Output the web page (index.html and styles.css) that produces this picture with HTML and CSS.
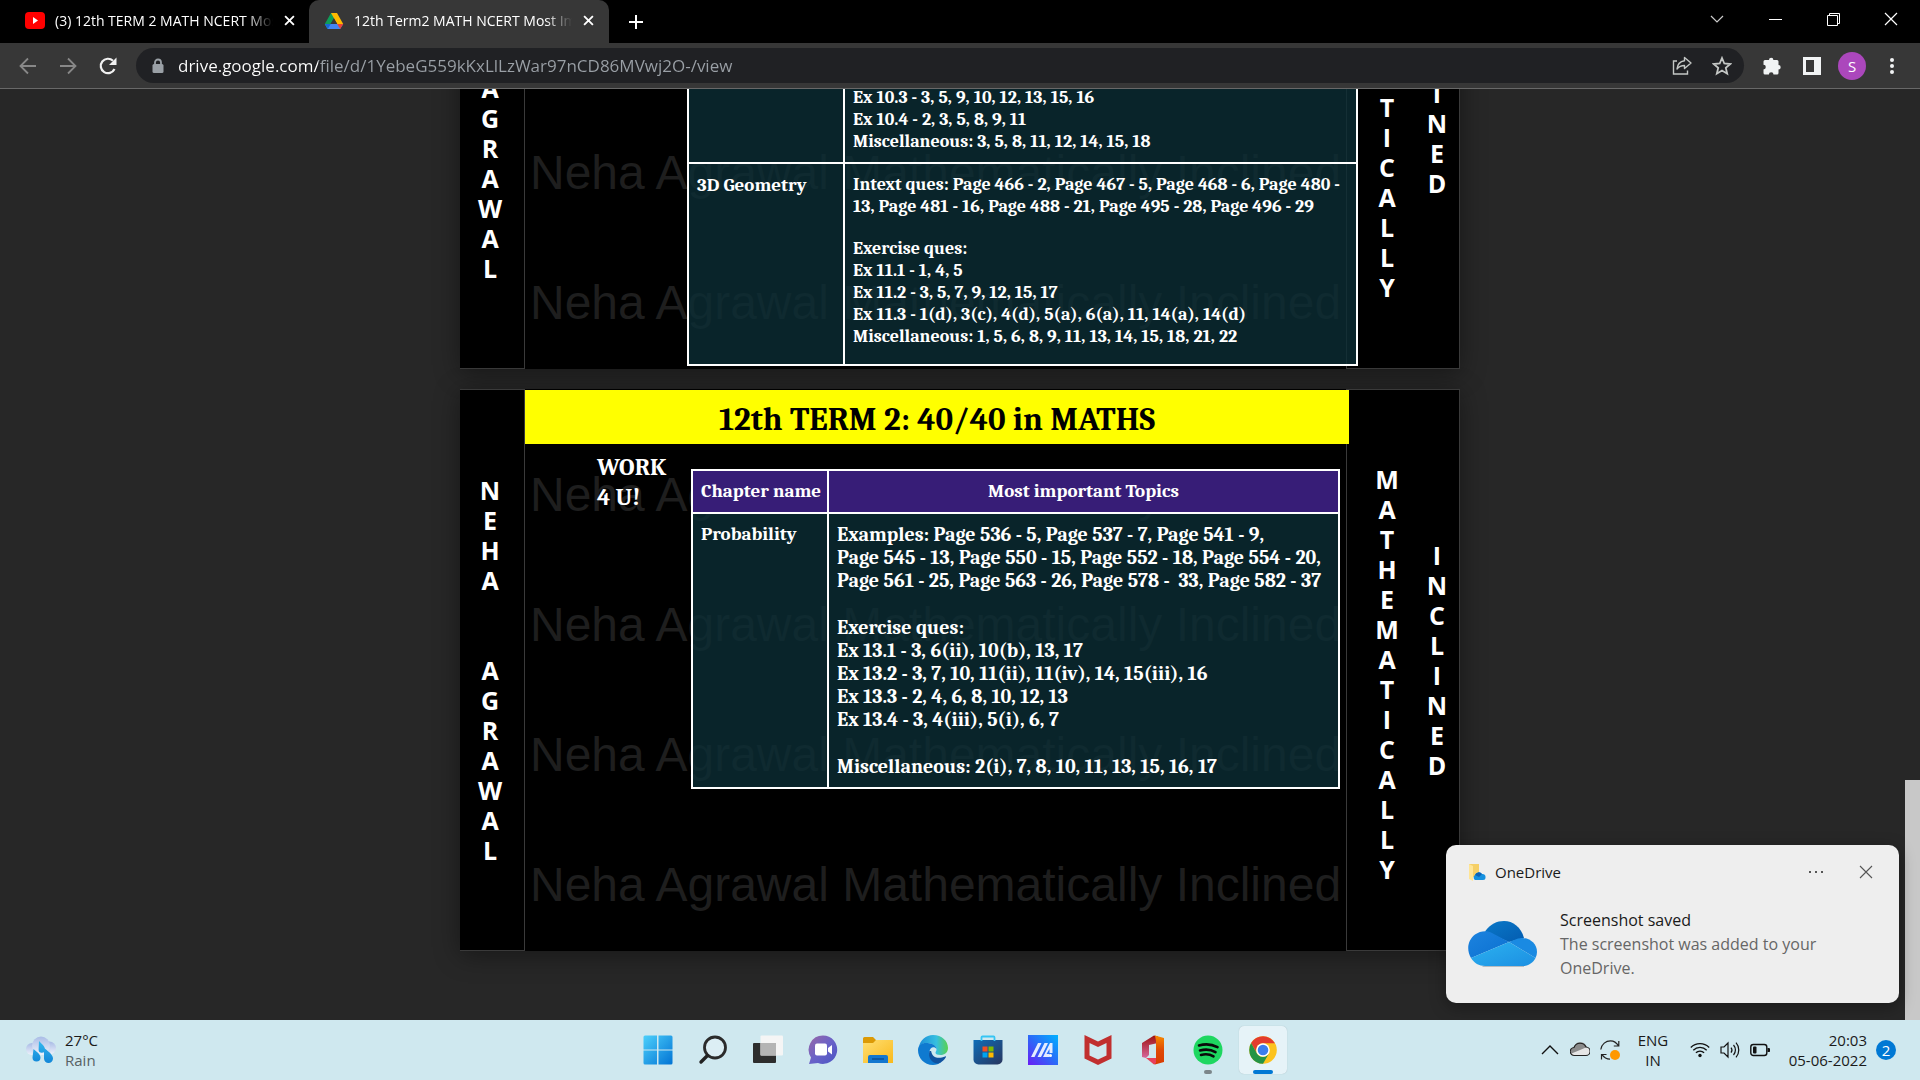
FILE: index.html
```html
<!DOCTYPE html>
<html lang="en">
<head>
<meta charset="utf-8">
<title>12th Term2 MATH NCERT Most Important Questions</title>
<link rel="stylesheet" href="styles.css">
</head>
<body>
<header class="tabstrip">
  <div class="tab">
    <svg class="ico20" viewBox="0 0 20 20"><rect y="1" width="20" height="17" rx="4" fill="#f00"/><path d="M8 6l5 3.500-5 3.500z" fill="#fff"/></svg>
    <span class="tab-title">(3) 12th TERM 2 MATH NCERT Most Important</span>
    <button class="tab-close" aria-label="Close tab"><svg viewBox="0 0 10 10"><path d="M1 1l8 8M9 1L1 9" stroke="#fff" stroke-width="1.700"/></svg></button>
  </div>
  <div class="tab tab-active">
    <svg class="ico20" viewBox="0 0 20 20"><path d="M7 2h6l-3 5-6.500 11L.8 13z" fill="#0f9d58"/><path d="M7 2h6l6.200 11h-6z" fill="#ffba00"/><path d="M4 13h15.200l-3 5H3.800L.9 13z" fill="#4285f4"/><path d="M13.200 13h6l-3 5z" fill="#ea4335"/><path d="M.8 13H4l2.800 0L3.700 18z" fill="#1967d2"/><path d="M10 7.500l3.200 5.500H6.800z" fill="#373737"/></svg>
    <span class="tab-title">12th Term2 MATH NCERT Most Important</span>
    <button class="tab-close" aria-label="Close tab"><svg viewBox="0 0 10 10"><path d="M1 1l8 8M9 1L1 9" stroke="#fff" stroke-width="1.700"/></svg></button>
  </div>
  <button class="newtab" aria-label="New tab"><svg viewBox="0 0 16 16"><path d="M8 1v14M1 8h14" stroke="#fff" stroke-width="2"/></svg></button>
  <div class="winctl">
    <button aria-label="Search tabs"><svg viewBox="0 0 14 14"><path d="M1 4l6 6 6-6" fill="none" stroke="#ccc" stroke-width="1.200"/></svg></button>
    <button aria-label="Minimize"><svg viewBox="0 0 14 14"><path d="M1 7.500h13" stroke="#fff"/></svg></button>
    <button aria-label="Restore"><svg viewBox="0 0 14 14"><path d="M1.500 3.500h10v10h-10zM3.500 3.500v-2h10v10h-2" fill="none" stroke="#fff"/></svg></button>
    <button aria-label="Close"><svg viewBox="0 0 14 14"><path d="M1 1l12 12M13 1L1 13" stroke="#fff" stroke-width="1.200"/></svg></button>
  </div>
</header>
<nav class="toolbar">
  <div class="navbtns">
    <button aria-label="Back"><svg viewBox="0 0 20 20"><path d="M18 10H3M10 2.500L2.500 10l7.500 7.500" fill="none" stroke="#888" stroke-width="1.800"/></svg></button>
    <button aria-label="Forward"><svg viewBox="0 0 20 20"><path d="M2 10h15M10 2.500l7.500 7.500-7.500 7.500" fill="none" stroke="#888" stroke-width="1.800"/></svg></button>
    <button aria-label="Reload"><svg viewBox="0 0 20 20"><path d="M16.500 13A7.200 7.200 0 1 1 15 4.800" fill="none" stroke="#f1f1f1" stroke-width="2.200"/><path d="M18.500 1.500v7.500h-7.500z" fill="#f1f1f1"/></svg></button>
  </div>
  <div class="omnibox">
    <svg class="lock" viewBox="0 0 12 16"><path d="M3 7V4.500a3 3 0 0 1 6 0V7" fill="none" stroke="#9aa0a6" stroke-width="1.800"/><rect x=".5" y="6" width="11" height="9" rx="1.500" fill="#9aa0a6"/></svg>
    <input class="url" type="text" aria-label="Address" value="drive.google.com/file/d/1YebeG559kKxLlLzWar97nCD86MVwj2O-/view">
    <button aria-label="Share"><svg viewBox="0 0 20 20"><path d="M5 5H1.500v13h14v-3.500" fill="none" stroke="#c4c7c5" stroke-width="1.400"/><path d="M12.500 1.500l6.500 5.500-6.500 5.500V9.500c-3.500 0-5.500 1-7.500 3.500.4-4.500 3-7.500 7.500-8.200z" fill="none" stroke="#c4c7c5" stroke-width="1.400" stroke-linejoin="round"/></svg></button>
    <button aria-label="Bookmark"><svg viewBox="0 0 20 20"><path d="M10 2l2.300 5.500 6 .5-4.500 3.900 1.400 5.800-5.200-3.100-5.200 3.100 1.400-5.800L1.700 8l6-.5z" fill="none" stroke="#c4c7c5" stroke-width="1.800"/></svg></button>
  </div>
  <div class="extras">
    <button aria-label="Extensions"><svg viewBox="0 0 20 20"><path d="M7 4a2.200 2.200 0 0 1 4.400 0H15a1.500 1.500 0 0 1 1.500 1.500V9a2.200 2.200 0 0 1 0 4.400V17a1.500 1.500 0 0 1-1.500 1.500h-3.500a2.300 2.300 0 0 0-4.600 0H3A1.500 1.500 0 0 1 1.500 17v-3.600a2.300 2.300 0 0 0 0-4.600V5.500A1.500 1.500 0 0 1 3 4z" fill="#f1f3f4"/></svg></button>
    <button aria-label="Side panel"><svg viewBox="0 0 20 20"><path d="M1 1h18v18H1zM4 4v12h8V4z" fill="#f1f3f4" fill-rule="evenodd"/></svg></button>
    <button class="avatar" aria-label="Profile">S</button>
    <button aria-label="Menu"><svg viewBox="0 0 20 20"><circle cx="10" cy="4" r="2" fill="#f1f3f4"/><circle cx="10" cy="10" r="2" fill="#f1f3f4"/><circle cx="10" cy="16" r="2" fill="#f1f3f4"/></svg></button>
  </div>
</nav>

<main class="viewer">
  <section class="page">
    <div class="rail rail-left"><p class="letters">N
E
H
A


A
G
R
A
W
A
L</p></div>
    <div class="sheet sheet-end">
      <div class="watermark" aria-hidden="true"><p>Neha Agrawal Mathematically Inclined</p><p>Neha Agrawal Mathematically Inclined</p><p>Neha Agrawal Mathematically Inclined</p><p>Neha Agrawal Mathematically Inclined</p></div>
      <table class="topics topics-wide">
        <tbody>
        <tr><td class="chapter"></td><td>Ex 10.3 - 3, 5, 9, 10, 12, 13, 15, 16<br>Ex 10.4 - 2, 3, 5, 8, 9, 11<br>Miscellaneous: 3, 5, 8, 11, 12, 14, 15, 18</td></tr>
        <tr class="last"><td class="chapter">3D Geometry</td><td>
          <p>Intext ques: Page 466 - 2, Page 467 - 5, Page 468 - 6, Page 480 -<br>13, Page 481 - 16, Page 488 - 21, Page 495 - 28, Page 496 - 29</p>
          <p>Exercise ques:<br>Ex 11.1 - 1, 4, 5<br>Ex 11.2 - 3, 5, 7, 9, 12, 15, 17<br>Ex 11.3 - 1(d), 3(c), 4(d), 5(a), 6(a), 11, 14(a), 14(d)<br>Miscellaneous: 1, 5, 6, 8, 9, 11, 13, 14, 15, 18, 21, 22</p></td></tr>
        </tbody>
      </table>
    </div>
    <div class="rail rail-right"><p class="letters">M
A
T
H
E
M
A
T
I
C
A
L
L
Y</p><p class="letters letters-low">I
N
C
L
I
N
E
D</p></div>
  </section>

  <section class="page">
    <div class="rail rail-left"><p class="letters">N
E
H
A


A
G
R
A
W
A
L</p></div>
    <div class="sheet">
      <div class="watermark" aria-hidden="true"><p>Neha Agrawal Mathematically Inclined</p><p>Neha Agrawal Mathematically Inclined</p><p>Neha Agrawal Mathematically Inclined</p><p>Neha Agrawal Mathematically Inclined</p></div>
      <h1 class="banner">12th TERM 2: 40/40 in MATHS</h1>
      <div class="work-row">
        <h2 class="work">WORK<br>4 U!</h2>
        <table class="topics">
          <thead><tr><th class="chapter" scope="col">Chapter name</th><th scope="col">Most important Topics</th></tr></thead>
          <tbody><tr><td class="chapter">Probability</td><td>
            <p>Examples: Page 536 - 5, Page 537 - 7, Page 541 - 9,<br>Page 545 - 13, Page 550 - 15, Page 552 - 18, Page 554 - 20,<br>Page 561 - 25, Page 563 - 26, Page 578 -&nbsp; 33, Page 582 - 37</p>
            <p>Exercise ques:<br>Ex 13.1 - 3, 6(ii), 10(b), 13, 17<br>Ex 13.2 - 3, 7, 10, 11(ii), 11(iv), 14, 15(iii), 16<br>Ex 13.3 - 2, 4, 6, 8, 10, 12, 13<br>Ex 13.4 - 3, 4(iii), 5(i), 6, 7</p>
            <p>Miscellaneous: 2(i), 7, 8, 10, 11, 13, 15, 16, 17</p></td></tr></tbody>
        </table>
      </div>
    </div>
    <div class="rail rail-right"><p class="letters">M
A
T
H
E
M
A
T
I
C
A
L
L
Y</p><p class="letters letters-low">I
N
C
L
I
N
E
D</p></div>
  </section>

  <div class="thumb"></div>

  <aside class="toast">
    <div class="toast-head">
      <svg class="toast-app" viewBox="0 0 18 18"><path d="M1 1h10v13H1z" fill="#f5cf66"/><path d="M1 1l4 2v15l-4-2z" fill="#ffe596"/><path d="M7 17a3 3 0 0 1 0-5 4 4 0 0 1 7-1 3 3 0 0 1 3.500 3.500A2.500 2.500 0 0 1 15 17z" fill="#1490df"/><path d="M7 12a4 4 0 0 1 7-1l-3 3z" fill="#0a63b8"/></svg>
      <span>OneDrive</span>
      <button aria-label="More"><svg viewBox="0 0 14 14"><path d="M0 7h2M6 7h2M12 7h2" stroke="#555" stroke-width="2"/></svg></button>
      <button aria-label="Dismiss"><svg viewBox="0 0 14 14"><path d="M1 1l12 12M13 1L1 13" stroke="#555" stroke-width="1.100"/></svg></button>
    </div>
    <div class="toast-body">
      <svg class="cloud" viewBox="0 0 69 46"><defs>
        <linearGradient id="c1" x1="0" y1="0" x2="1" y2="1"><stop offset="0" stop-color="#0a78c8"/><stop offset="1" stop-color="#035cb0"/></linearGradient>
        <linearGradient id="c2" x1="0" y1="0" x2="1" y2="1"><stop offset="0" stop-color="#1c83df"/><stop offset="1" stop-color="#0b70d0"/></linearGradient>
        <linearGradient id="c3" x1="0" y1="0" x2="1" y2="1"><stop offset="0" stop-color="#2cb2f0"/><stop offset="1" stop-color="#1c8fe2"/></linearGradient></defs>
        <path d="M15 46a15 15 0 0 1-1-1h42v1z" fill="#b8bcc0"/>
        <path d="M17 10.500C22 3 29 0 36 0c9 0 17 6 20 17L41 21z" fill="url(#c1)"/>
        <path d="M3 37C-2 28 0 19 7 13.500 12 10 19 9 24 12l17 9z" fill="url(#c2)"/>
        <path d="M41 21l9-3.500C60 15 69 22 69 31c0 2-.5 4-1.500 6z" fill="#1a8ae2"/>
        <path d="M3 37l38-16 26.500 16C65 42 60 45 55 45H17C11 45 6 42 3 37z" fill="url(#c3)"/></svg>
      <div><p class="toast-title">Screenshot saved</p><p class="toast-text">The screenshot was added to your OneDrive.</p></div>
    </div>
  </aside>
</main>

<footer class="taskbar">
  <button class="weather">
    <svg viewBox="0 0 30 28"><defs><linearGradient id="w1" x1="0" y1="0" x2="0" y2="1"><stop offset="0" stop-color="#a9bce6"/><stop offset="1" stop-color="#eef2fb"/></linearGradient><linearGradient id="w2" x1="0" y1="0" x2="0" y2="1"><stop offset="0" stop-color="#35b9ee"/><stop offset="1" stop-color="#1286d8"/></linearGradient></defs>
    <circle cx="6" cy="13" r="6" fill="url(#w1)"/><circle cx="23.500" cy="12" r="6.500" fill="url(#w1)"/><path d="M5 19a10 10 0 1 1 20 0z" fill="url(#w1)"/><circle cx="15" cy="9.500" r="9" fill="url(#w1)"/>
    <path d="M14 5c4 4 6 6 6 8.500a3.200 3.200 0 0 1-6.400 0zM8.500 13c5 4 7 6 7 8.500a4 4 0 0 1-8 0zM19 12c7 5 9 8 9 10.500a4.500 4.500 0 0 1-9 0z" fill="url(#w2)" transform="translate(-1 0)"/></svg>
    <span>27°C<br><span class="dim">Rain</span></span>
  </button>
  <div class="apps">
    <button aria-label="Start"><svg viewBox="0 0 30 30"><defs><linearGradient id="s1" x1="0" y1="0" x2="1" y2="1"><stop offset="0" stop-color="#4cd0fb"/><stop offset="1" stop-color="#0273d4"/></linearGradient></defs><path d="M2 .5h12v14H.5V2A1.500 1.500 0 0 1 2 .5zM15.500.5H28A1.500 1.500 0 0 1 29.500 2v12.500h-14zM.5 15.500H14v14H2A1.500 1.500 0 0 1 .5 28zM15.500 15.500h14V28a1.500 1.500 0 0 1-1.500 1.500H15.500z" fill="url(#s1)"/></svg></button>
    <button aria-label="Search"><svg viewBox="0 0 30 30"><circle cx="17" cy="12.500" r="10.500" fill="#dceef4" stroke="#2b2b2b" stroke-width="2.800"/><path d="M9.500 20.500L3 27" stroke="#222" stroke-width="3.400" stroke-linecap="round"/></svg></button>
    <button aria-label="Task view"><svg viewBox="0 0 30 30"><rect y="8" width="23" height="20" rx="1" fill="#2d2d2d"/><rect x="7.500" y=".5" width="22.500" height="20" rx="1" fill="#f5f5f5"/><rect x="7.500" y="8" width="15.500" height="12.500" fill="#b4b4b4"/></svg></button>
    <button aria-label="Chat"><svg viewBox="0 0 30 30"><defs><linearGradient id="t1" x1="0" y1="0" x2="1" y2="1"><stop offset="0" stop-color="#9a67a6"/><stop offset=".5" stop-color="#6a62c8"/><stop offset="1" stop-color="#4a55c4"/></linearGradient></defs><path d="M15 .5a14.200 14.200 0 1 1-5 27.500L1 29l2-6.500A14.200 14.200 0 0 1 15 .5z" fill="url(#t1)"/><rect x="7" y="8.500" width="12" height="12" rx="2" fill="#fff"/><path d="M20 13l4-3v9.500l-4-3z" fill="#fff"/></svg></button>
    <button aria-label="File Explorer"><svg viewBox="0 0 30 30"><defs><linearGradient id="f1" x1="0" y1="0" x2="1" y2="1"><stop offset="0" stop-color="#ffdf72"/><stop offset="1" stop-color="#f9b91c"/></linearGradient></defs><path d="M0 3.500A1.500 1.500 0 0 1 1.500 2H10l3 3h15.500A1.500 1.500 0 0 1 30 6.500V9H0z" fill="#dc9a06"/><path d="M0 8h10l3-3h17v23H0z" fill="url(#f1)"/><path d="M5 28v-6a2 2 0 0 1 2-2h16a2 2 0 0 1 2 2v6z" fill="#1377cf"/><path d="M9 24h12" stroke="#0b4f97" stroke-width="1.500"/></svg></button>
    <button aria-label="Edge"><svg viewBox="0 0 30 30"><defs><linearGradient id="e1" x1="0" y1="0" x2="1" y2="0"><stop offset="0" stop-color="#1d8ed8"/><stop offset=".6" stop-color="#36bfe0"/><stop offset="1" stop-color="#58d24e"/></linearGradient></defs><path d="M1 12C2 5 8 0 15 0c9 0 15 6 15 13 0 4.500-3.500 7-7.500 7-3 0-5-1-5-2.300 0-1 1-1.500 1-3.200C18.500 11 14 8 9.500 8 5 8 2 10 1 12z" fill="url(#e1)"/><path d="M0 15C0 10 4 7.500 9.500 8c4.500.2 8.500 2.500 9 6-2-3-7-2-7 3C11.500 24 18 29 24 26.500 21 29 18 30 15 30 6 30 0 23 0 15z" fill="#0f7ad0"/><path d="M11.500 16c-2 7 3 13 9 12.500 3.500-1.500 6-3.500 7.500-6.500.2-.6-.3-.8-.9-.5-7 3-13 1-14-5.500z" fill="#10529f"/></svg></button>
    <button aria-label="Microsoft Store"><svg viewBox="0 0 30 30"><defs><linearGradient id="m1" x1="0" y1="0" x2="1" y2="1"><stop offset="0" stop-color="#0f6db8"/><stop offset="1" stop-color="#28355e"/></linearGradient></defs><path d="M.5 5h29v19.500a5 5 0 0 1-5 5h-19a5 5 0 0 1-5-5z" fill="url(#m1)"/><path d="M8.500 6V2.500a1 1 0 0 1 1-1h11a1 1 0 0 1 1 1V6" fill="none" stroke="#35c5f4" stroke-width="1.800"/><path d="M9.500 11.500h5v5h-5z" fill="#f25022"/><path d="M15.500 11.500h5v5h-5z" fill="#7fba00"/><path d="M9.500 17.500h5v5h-5z" fill="#00a4ef"/><path d="M15.500 17.500h5v5h-5z" fill="#ffb900"/></svg></button>
    <button aria-label="MyASUS"><svg viewBox="0 0 30 30"><defs><linearGradient id="a1" x1="0" y1="1" x2="1" y2="0"><stop offset="0" stop-color="#6a1cf5"/><stop offset=".5" stop-color="#2b6af8"/><stop offset="1" stop-color="#00b2ff"/></linearGradient></defs><path d="M0 0h30v30H0z" fill="url(#a1)"/><path d="M3 22L10 8h3.500l-7 14zM9.500 22l7-14H20l-7 14zM15 22l7-14h2.500v10h-3V14l-3 5h3v3z" fill="#e4ecff"/><circle cx="22.500" cy="20.500" r="1.500" fill="#fff"/></svg></button>
    <button aria-label="McAfee"><svg viewBox="0 0 30 30"><path d="M1.500 0L15 6.500 28.500 0v23.500L15 30 1.500 23.500zM6.500 8v12.500L15 24.500l8.500-4V8L15 12z" fill="#c12f2f"/></svg></button>
    <button aria-label="Office"><svg viewBox="0 0 30 30"><defs><linearGradient id="o1" x1="0" y1="0" x2="0" y2="1"><stop offset="0" stop-color="#f78a00"/><stop offset=".5" stop-color="#e04a05"/><stop offset="1" stop-color="#d83b01"/></linearGradient><linearGradient id="o2" x1="0" y1="0" x2="0" y2="1"><stop offset="0" stop-color="#9e1212"/><stop offset="1" stop-color="#d6679c"/></linearGradient></defs><path d="M4 8l12-7.500 4 1V8l-9 2v10l-3 3-4-1z" fill="url(#o2)"/><path d="M17 .5l9 2.500v24l-9 2.500-2-1 3-2.500V6z" fill="url(#o1)"/><path d="M8 23h10v5l-2 1.500z" fill="#e8405a"/></svg></button>
    <button class="running" aria-label="Spotify"><svg viewBox="0 0 30 30"><circle cx="15" cy="15" r="14.500" fill="#1ed760"/><path d="M6 10.500c6-1.800 13-1.300 18.500 1.700M7 15.500c5.500-1.500 11-1 15.500 1.600M8 20c4.500-1.200 9-.7 12.500 1.400" fill="none" stroke="#0a0a0a" stroke-width="2.600" stroke-linecap="round"/></svg></button>
    <button class="focused" aria-label="Chrome"><svg viewBox="0 0 30 30"><circle cx="15" cy="15" r="13.800" fill="#fcc31e"/><path d="M3.100 8.100A13.800 13.800 0 0 1 27 8.200H15a6.800 6.800 0 0 0-6 10z" fill="#e33b2e"/><path d="M3.100 8.100L9 18.400a6.800 6.800 0 0 0 6 3.400 6.800 6.800 0 0 0 5.900-3.400L15 28.800A13.800 13.800 0 0 1 3.100 8.100z" fill="#249446"/><circle cx="15" cy="15" r="6.800" fill="#fff"/><circle cx="15" cy="15" r="5.300" fill="#3b7ded"/></svg></button>
  </div>
  <div class="tray">
    <button aria-label="Hidden icons"><svg viewBox="0 0 20 20"><path d="M2 14l8-8 8 8" fill="none" stroke="#111" stroke-width="1.400"/></svg></button>
    <button aria-label="OneDrive"><svg viewBox="0 0 20 20"><path d="M4.500 15.500a4 4 0 0 1-.5-8 6.500 6.500 0 0 1 12-.5 4.200 4.200 0 0 1-.3 8.500z" fill="#e6e6e6"/><path d="M1.500 13.500L10 10l7-3-1-1.500A6.500 6.500 0 0 0 4 7.500a4 4 0 0 0-2.500 6z" fill="#8b8b8b"/><path d="M4.500 15.500a4 4 0 0 1-.5-8 6.500 6.500 0 0 1 12-.5 4.200 4.200 0 0 1-.3 8.500z" fill="none" stroke="#222" stroke-width="1.200"/></svg></button>
    <button aria-label="Update"><svg viewBox="0 0 20 20"><path d="M.8 9.500C1.500 4 6 .8 10.500.8c3.500 0 6 1.700 8 5M18.800 1v5h-5M10 19.200c-3.500 0-6-1.500-8-4.500M1.500 19.500v-5h5" fill="none" stroke="#222" stroke-width="1.200"/><circle cx="15" cy="15" r="5" fill="#ff9800"/></svg></button>
    <span class="lang">ENG<br>IN</span>
    <button aria-label="Wi-Fi"><svg viewBox="0 0 20 20"><path d="M.8 7.500a13 13 0 0 1 18.400 0M3.300 10.200a9.500 9.500 0 0 1 13.400 0M5.900 12.800a5.800 5.800 0 0 1 8.200 0" fill="none" stroke="#111" stroke-width="1.300"/><circle cx="10" cy="15.500" r="1.700" fill="#111"/></svg></button>
    <button aria-label="Volume"><svg viewBox="0 0 20 20"><path d="M1 7h3l4-4v14l-4-4H1zM11 7.500a4 4 0 0 1 0 5M13.500 5a7.500 7.500 0 0 1 0 10M16 2.700a11 11 0 0 1 0 14.600" fill="none" stroke="#111" stroke-width="1.200"/></svg></button>
    <button aria-label="Battery"><svg viewBox="0 0 20 20"><rect x=".8" y="4.500" width="16" height="11" rx="2.500" fill="none" stroke="#111" stroke-width="1.400"/><rect x="3" y="6.500" width="3.500" height="7" rx="1" fill="#111"/><path d="M17.500 8h1a1.500 1.500 0 0 1 0 4h-1z" fill="#111"/></svg></button>
    <time class="clock">20:03<br>05-06-2022</time>
    <span class="badge">2</span>
  </div>
</footer>
</body>
</html>
```
FILE: styles.css
```css
* { box-sizing: border-box; }
body {
  margin: 0;
  height: 100vh;
  display: flex;
  flex-direction: column;
  overflow: hidden;
  background: #272727;
  font-family: "Segoe UI", "Open Sans", "Noto Sans", sans-serif;
  font-size: 15px;
}
p, h1, h2 { margin: 0; }
button {
  border: 0;
  padding: 0;
  background: none;
  font: inherit;
  color: inherit;
  display: flex;
  align-items: center;
  justify-content: center;
}
svg { display: block; }

/* tab strip */
.tabstrip { height: 43px; flex: none; display: flex; background: #000; color: #fff; font-size: 14px; }
.tab { width: 300px; display: flex; align-items: center; padding: 0 15px 2px; gap: 10px; margin-left: 10px; }
.tab + .tab { margin-left: -1px; }
.tab-active { background: #373737; border-radius: 10px 10px 0 0; }
.ico20 { width: 20px; height: 20px; flex: none; }
.tab-title {
  flex: 1;
  min-width: 0;
  overflow: hidden;
  white-space: nowrap;
  line-height: 20px;
  mask-image: linear-gradient(90deg, #000 88%, transparent);
}
.tab-close { width: 12px; height: 20px; }
.tab-close svg { width: 11px; height: 11px; }
.newtab { width: 54px; }
.newtab svg { width: 16px; height: 16px; }
.winctl { margin-left: auto; display: flex; height: 37px; }
.winctl button { width: 58px; }
.winctl svg { width: 14px; height: 14px; }

/* toolbar */
.toolbar {
  height: 46px;
  flex: none;
  display: flex;
  align-items: center;
  background: #373737;
  border-bottom: 1px solid #686868;
}
.navbtns { display: flex; gap: 20px; padding: 0 18px; }
.navbtns svg, .omnibox button svg, .extras svg { width: 20px; height: 20px; }
.omnibox {
  flex: 1;
  height: 35px;
  display: flex;
  align-items: center;
  gap: 20px;
  padding: 0 12px 0 16px;
  border-radius: 18px;
  background: #202124;
}
.lock { width: 12px; height: 16px; flex: none; }
.url {
  flex: 1;
  min-width: 0;
  border: 0;
  outline: 0;
  padding: 0;
  margin-left: -6px;
  font: inherit;
  font-size: 17px;
  line-height: 24px;
  color: transparent;
  background: linear-gradient(90deg, #fff 140px, #9aa0a6 140px);
  background-clip: text;
}
.extras { display: flex; align-items: center; gap: 20px; padding: 0 18px; }
.extras .avatar { width: 28px; height: 28px; margin: 0 -4px; border-radius: 50%; background: #ab47bc; color: #fff; }

/* document viewer */
.viewer {
  flex: 1;
  min-height: 0;
  position: relative;
  overflow: hidden;
  display: flex;
  flex-direction: column;
  align-items: center;
  justify-content: flex-end;
  gap: 20px;
  padding-bottom: 69px;
}
.page {
  width: 1000px;
  max-width: 100%;
  height: 562px;
  flex: none;
  display: grid;
  grid-template-columns: 65px 1fr 114px;
  background: #000;
  color: #fff;
  box-shadow: 0 4px 24px rgba(0, 0, 0, .4);
}
.rail { border: 1px solid #3a3a3a; display: flex; }
.rail-left { border-left: 0; padding: 85px 0 0 20px; }
.rail-right { padding: 74px 0 0 30px; gap: 30px; }
.letters {
  width: 20px;
  display: flex;
  justify-content: center;
  white-space: pre;
  text-align: center;
  font: 700 25px/30px "Comic Sans MS", "Open Sans", sans-serif;
}
.letters-low { padding-top: 76px; }
.sheet { position: relative; display: flex; flex-direction: column; font-family: Cambria, "Liberation Serif", serif; font-weight: 700; }
.sheet-end { justify-content: flex-end; padding-bottom: 3px; }
.watermark {
  position: absolute;
  inset: 41px 0 0 5px;
  font: 400 48px/130px "Liberation Sans", sans-serif;
  color: #1e1e1e;
  white-space: nowrap;
}
.banner {
  position: relative;
  height: 54px;
  margin: 1px -3px 0 0;
  background: #ff0;
  color: #000;
  text-align: center;
  font-size: 33px;
  line-height: 58px;
}
.work-row { position: relative; display: flex; padding: 8px 6px 0 72px; }
.work { width: 94px; flex: none; font-size: 24px; line-height: 30px; }
.topics {
  position: relative;
  flex: 1;
  margin-top: 17px;
  border-collapse: collapse;
  font-size: 20px;
  line-height: 23px;
}
.topics th, .topics td { border: 2px solid #fff; padding: 9px 8px; vertical-align: top; text-align: left; font-weight: 700; white-space: nowrap; }
.topics th { background: #371d77; text-align: center; font-size: 19px; }
.topics td { background: rgba(11, 45, 52, .8); }
.topics .chapter { width: 136px; padding-right: 0; text-align: left; font-size: 19px; }
.topics p + p { margin-top: 24px; }
.topics-wide { flex: none; margin: 0 -12px 0 162px; font-size: 18px; line-height: 22px; }
.topics-wide .chapter { width: 156px; }
.topics-wide p + p { margin-top: 20px; }
.topics-wide .last td { padding-top: 10px; padding-bottom: 16px; }
.thumb { position: absolute; right: 0; bottom: 0; width: 15px; height: 240px; background: #c8c8c8; }

/* notification */
.toast {
  position: absolute;
  right: 21px;
  bottom: 17px;
  width: 453px;
  padding: 15px 23px 23px 22px;
  border-radius: 10px;
  background: #eee;
  color: #1a1a1a;
  box-shadow: 0 4px 16px rgba(0, 0, 0, .35);
}
.toast-head { display: flex; align-items: center; height: 24px; }
.toast-head span { flex: 1; padding-left: 9px; }
.toast-app { width: 18px; height: 18px; }
.toast-head button { width: 20px; margin-left: 30px; }
.toast-head button svg { width: 14px; height: 14px; }
.toast-body { display: flex; align-items: center; gap: 23px; padding-top: 24px; font-size: 16px; line-height: 24px; }
.cloud { width: 69px; height: 46px; flex: none; }
.toast-text { color: #666; }

/* taskbar */
.taskbar {
  height: 60px;
  flex: none;
  display: grid;
  grid-template-columns: 1fr auto 1fr;
  align-items: center;
  background: #cfe8ef;
  color: #1a1a1a;
  line-height: 20px;
}
.weather { justify-self: start; gap: 9px; padding-left: 26px; text-align: left; }
.weather svg { width: 30px; height: 28px; }
.dim { color: #566164; }
.apps { display: flex; gap: 7px; }
.apps button { position: relative; width: 48px; height: 48px; border-radius: 5px; }
.apps svg { width: 30px; height: 30px; }
.running::after, .focused::after {
  content: "";
  position: absolute;
  bottom: 0;
  width: 8px;
  height: 4px;
  border-radius: 2px;
  background: #7b868a;
}
.apps .focused { background: #e6f3f8; box-shadow: 0 0 1px #9fb4bb; }
.focused::after { width: 20px; background: #0078d4; }
.tray { justify-self: end; display: flex; align-items: center; gap: 10px; padding-right: 24px; }
.tray svg { width: 20px; height: 20px; }
.lang { width: 46px; text-align: center; }
.lang + button { margin-left: 4px; }
.clock { width: 87px; text-align: right; white-space: nowrap; }
.badge { width: 20px; height: 20px; margin-left: -1px; border-radius: 50%; background: #0078d4; color: #fff; text-align: center; }
```
